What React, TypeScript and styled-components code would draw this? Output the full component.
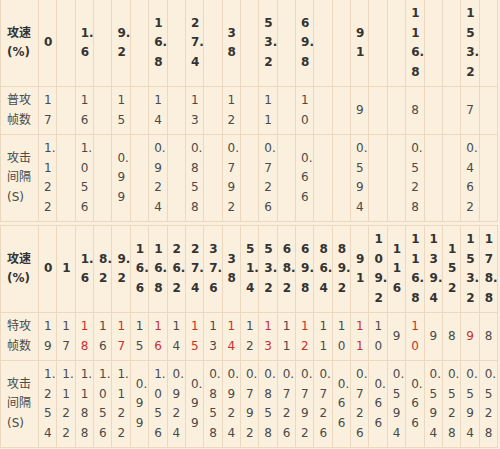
import React from 'react'
import styled, { createGlobalStyle } from 'styled-components'

const GlobalStyle = createGlobalStyle`
  html, body {
    margin: 0;
    padding: 0;
    background: #fbf0dd;
  }
  body {
    font-family: "DejaVu Sans", "Noto Sans CJK SC", sans-serif;
    font-size: 12px;
    color: #3a3a3a;
    overflow: hidden;
  }
`

const Page = styled.div`
  width: 500px;
  display: flex;
  flex-direction: column;
  gap: 3px;
  margin-top: -1px;
`

const Table = styled.table`
  width: 498px;
  table-layout: fixed;
  border-collapse: collapse;
  background: #fbf0dd;
`

const LabelCol = styled.col`
  width: 38px;
`

const Label = styled.th<{ $bold?: boolean }>`
  border: 1px solid #ead9c0;
  padding: 4px 3px 4px 6px;
  text-align: left;
  vertical-align: middle;
  line-height: 19.5px;
  font-weight: ${(p) => (p.$bold ? 700 : 400)};
  color: ${(p) => (p.$bold ? '#333' : '#4a4a4a')};
  word-break: break-all;
`

const Cell = styled.td<{ $bold?: boolean; $red?: boolean }>`
  border: 1px solid #ead9c0;
  padding: 4px 3px 4px 5px;
  text-align: left;
  vertical-align: middle;
  line-height: 19.5px;
  word-break: break-all;
  font-weight: ${(p) => (p.$bold ? 700 : 400)};
  color: ${(p) => (p.$red ? '#c8302c' : p.$bold ? '#333' : '#4a4a4a')};
`

const COLS = 25

// columns of the second table that also appear in the first (1-based)
const normalCols = [1, 3, 5, 7, 9, 11, 13, 15, 18, 21, 24]

const normalSpeed = ['0', '1.6', '9.2', '16.8', '27.4', '38', '53.2', '69.8', '91', '116.8', '153.2']
const normalFrames = ['17', '16', '15', '14', '13', '12', '11', '10', '9', '8', '7']
const normalInterval = ['1.122', '1.056', '0.99', '0.924', '0.858', '0.792', '0.726', '0.66', '0.594', '0.528', '0.462']

const skillSpeed = [
  '0', '1', '1.6', '8.2', '9.2', '16.6', '16.8', '26.2', '27.4', '37.6', '38', '51.4', '53.2',
  '68.2', '69.8', '86.4', '89.2', '91', '109.2', '116', '116.8', '139.4', '152', '153.2', '178.8',
]
const skillFrames = [
  '19', '17', '18', '16', '17', '15', '16', '14', '15', '13', '14', '12', '13',
  '11', '12', '11', '10', '11', '10', '9', '10', '9', '8', '9', '8',
]
const skillInterval = [
  '1.254', '1.122', '1.188', '1.056', '1.122', '0.99', '1.056', '0.924', '0.99', '0.858', '0.924', '0.792', '0.858',
  '0.726', '0.792', '0.726', '0.66', '0.726', '0.66', '0.594', '0.66', '0.594', '0.528', '0.594', '0.528',
]

const spread = (values: string[]) => {
  const row: string[] = Array(COLS).fill('')
  normalCols.forEach((c, i) => {
    row[c - 1] = values[i]
  })
  return row
}

const Cols = () => (
  <colgroup>
    <LabelCol />
    {Array.from({ length: COLS }).map((_, i) => (
      <col key={i} />
    ))}
  </colgroup>
)

const App: React.FC = () => {
  const redCols = normalCols.filter((c) => c !== 1)

  return (
    <>
      <GlobalStyle />
      <Page>
        <Table>
          <Cols />
          <tbody>
            <tr>
              <Label $bold>攻速(%)</Label>
              {spread(normalSpeed).map((v, i) => (
                <Cell key={i} $bold>{v}</Cell>
              ))}
            </tr>
            <tr>
              <Label>普攻帧数</Label>
              {spread(normalFrames).map((v, i) => (
                <Cell key={i}>{v}</Cell>
              ))}
            </tr>
            <tr>
              <Label>攻击间隔(S)</Label>
              {spread(normalInterval).map((v, i) => (
                <Cell key={i}>{v}</Cell>
              ))}
            </tr>
          </tbody>
        </Table>

        <Table>
          <Cols />
          <tbody>
            <tr>
              <Label $bold>攻速(%)</Label>
              {skillSpeed.map((v, i) => (
                <Cell key={i} $bold>{v}</Cell>
              ))}
            </tr>
            <tr>
              <Label>特攻帧数</Label>
              {skillFrames.map((v, i) => (
                <Cell key={i} $red={redCols.includes(i + 1)}>{v}</Cell>
              ))}
            </tr>
            <tr>
              <Label>攻击间隔(S)</Label>
              {skillInterval.map((v, i) => (
                <Cell key={i}>{v}</Cell>
              ))}
            </tr>
          </tbody>
        </Table>
      </Page>
    </>
  )
}

export default App
